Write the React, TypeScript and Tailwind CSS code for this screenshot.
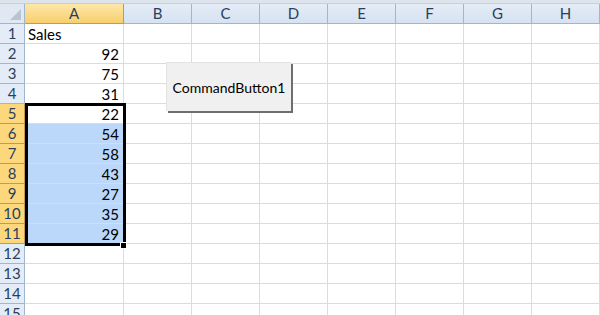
import React from 'react';

const cols = ['A', 'B', 'C', 'D', 'E', 'F', 'G', 'H'];
const values: Record<number, string> = {
  1: 'Sales',
  2: '92',
  3: '75',
  4: '31',
  5: '22',
  6: '54',
  7: '58',
  8: '43',
  9: '27',
  10: '35',
  11: '29',
};

const font = { fontFamily: 'Lato, "Open Sans", sans-serif' };

const App = () => {
  const rows = Array.from({ length: 15 }, (_, i) => i + 1);
  return (
    <div className="relative w-[600px] h-[315px] overflow-hidden bg-white text-black" style={font}>
      {/* strip under the ribbon */}
      <div className="h-[4px] bg-[#dde4ec] border-b border-[#c5d1de]"></div>

      <div className="grid grid-cols-[25px_99px_68px_68px_68px_68px_68px_68px_68px]">
        {/* corner */}
        <div className="relative h-[20px] bg-[#dfe8f3] border-r border-b border-[#9eb6ce]">
          <div className="absolute right-[3px] bottom-[3px] w-0 h-0 border-l-[11px] border-l-transparent border-b-[11px] border-b-[#b8c4d2]"></div>
        </div>
        {cols.map((c) => (
          <div
            key={c}
            className={
              c === 'A'
                ? 'h-[20px] flex items-center justify-center text-[15px] text-[#2a3f5c] bg-gradient-to-b from-[#fde7a8] to-[#f8cf6b] border-r border-b border-[#c29b4c]'
                : 'h-[20px] flex items-center justify-center text-[15px] text-[#2a3f5c] bg-gradient-to-b from-[#e4ecf7] to-[#d6e2f1] border-r border-b border-[#9eb6ce]'
            }
          >
            {c}
          </div>
        ))}

        {rows.map((r) => {
          const sel = r >= 5 && r <= 11;
          return (
            <React.Fragment key={r}>
              <div
                className={
                  sel
                    ? 'h-[20px] flex items-center justify-center text-[15px] text-[#2a3f5c] bg-[#fcd77c] border-r border-b border-[#c29b4c]'
                    : 'h-[20px] flex items-center justify-center text-[15px] text-[#2a3f5c] bg-[#e4ecf7] border-r border-b border-[#9eb6ce]'
                }
              >
                {r}
              </div>
              <div
                className={
                  (r >= 6 && r <= 11 ? 'bg-[#bbd8fb] ' : 'bg-white ') +
                  (r === 1 ? 'justify-start pl-[3px] ' : 'justify-end pr-[4px] ') +
                  'h-[20px] flex items-center pt-[1px] text-[15px] border-r border-b border-[#dadcdd]'
                }
              >
                {values[r]}
              </div>
              {cols.slice(1).map((c) => (
                <div key={c} className="h-[20px] border-r border-b border-[#dadcdd]"></div>
              ))}
            </React.Fragment>
          );
        })}
      </div>

      {/* selection outline A5:A11 */}
      <div className="absolute left-[25px] top-[103px] w-[101px] h-[143px] border-[3px] border-black"></div>
      <div className="absolute left-[120px] top-[242px] w-[7px] h-[7px] bg-black border border-white"></div>

      {/* ActiveX command button */}
      <div className="absolute left-[166px] top-[62px] w-[125px] h-[49px] flex items-center justify-center bg-[#f0f0f0] border-t border-l border-[#e3e3e3] shadow-[2px_2px_0_#6e6e6e] text-[14px] text-black">
        CommandButton1
      </div>
    </div>
  );
};

export default App;
